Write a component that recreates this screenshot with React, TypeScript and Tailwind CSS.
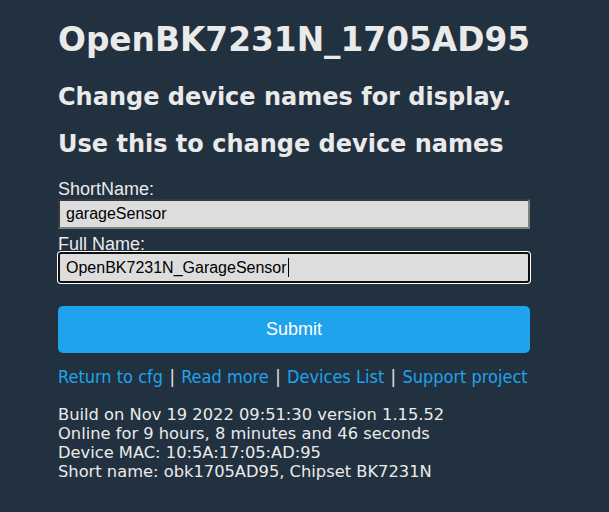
// OpenBK device name settings page

const LINKS = ["Return to cfg", "Read more", "Devices List", "Support project"];

const INFO = [
  "Build on Nov 19 2022 09:51:30 version 1.15.52",
  "Online for 9 hours, 8 minutes and 46 seconds",
  "Device MAC: 10:5A:17:05:AD:95",
  "Short name: obk1705AD95, Chipset BK7231N",
];

export default function App() {
  return (
    <div className="min-h-screen w-full bg-[#22313f] text-[#eaeaea] font-['DejaVu_Sans',Verdana,sans-serif]">
      <div className="ml-[58px] w-[472px] pt-[21px]">
        <h1 className="text-[32.8px] leading-[38px] font-bold">OpenBK7231N_1705AD95</h1>
        <h3 className="mt-[24px] text-[24px] leading-[28px] font-bold">Change device names for display.</h3>
        <h3 className="mt-[19px] text-[24px] leading-[28px] font-bold">Use this to change device names</h3>

        <form className="font-['Liberation_Sans',Arial,sans-serif]" onSubmit={(e) => e.preventDefault()}>
          <label className="mt-[22px] block text-[18px] leading-[18px]">ShortName:</label>
          <div className="mt-[1px] flex h-[30px] items-center border-2 border-t-[#3a3a3a] border-l-[#3a3a3a] border-b-[#808080] border-r-[#808080] bg-[#dddddd] px-[6px] text-[16px] text-black">
            garageSensor
          </div>

          <label className="mt-[6px] block text-[18px] leading-[18px]">Full Name:</label>
          <div className="-mt-px flex h-[31px] items-center rounded-[3px] border-2 border-[#101010] bg-[#dddddd] px-[6px] text-[16px] text-black ring-1 ring-white">
            OpenBK7231N_GarageSensor
            <span className="ml-[1px] inline-block h-[19px] w-px bg-black" />
          </div>

          <button
            type="submit"
            className="mt-[23px] block h-[47px] w-full rounded-[5px] bg-[#1fa3ec] text-[18px] text-white"
          >
            Submit
          </button>
        </form>

        <div className="mt-[13px] whitespace-nowrap font-['DejaVu_Sans_Condensed','DejaVu_Sans',sans-serif] text-[18px] leading-[21px]">
          {LINKS.map((l, i) => (
            <span key={l}>
              {i > 0 && <span className="px-[1.2px]"> | </span>}
              <a href="#" className="text-[#1fa3ec]">{l}</a>
            </span>
          ))}
        </div>

        <div className="mt-[18px] text-[16.3px] leading-[19px]">
          {INFO.map((line) => (
            <div key={line}>{line}</div>
          ))}
        </div>
      </div>
    </div>
  );
}
